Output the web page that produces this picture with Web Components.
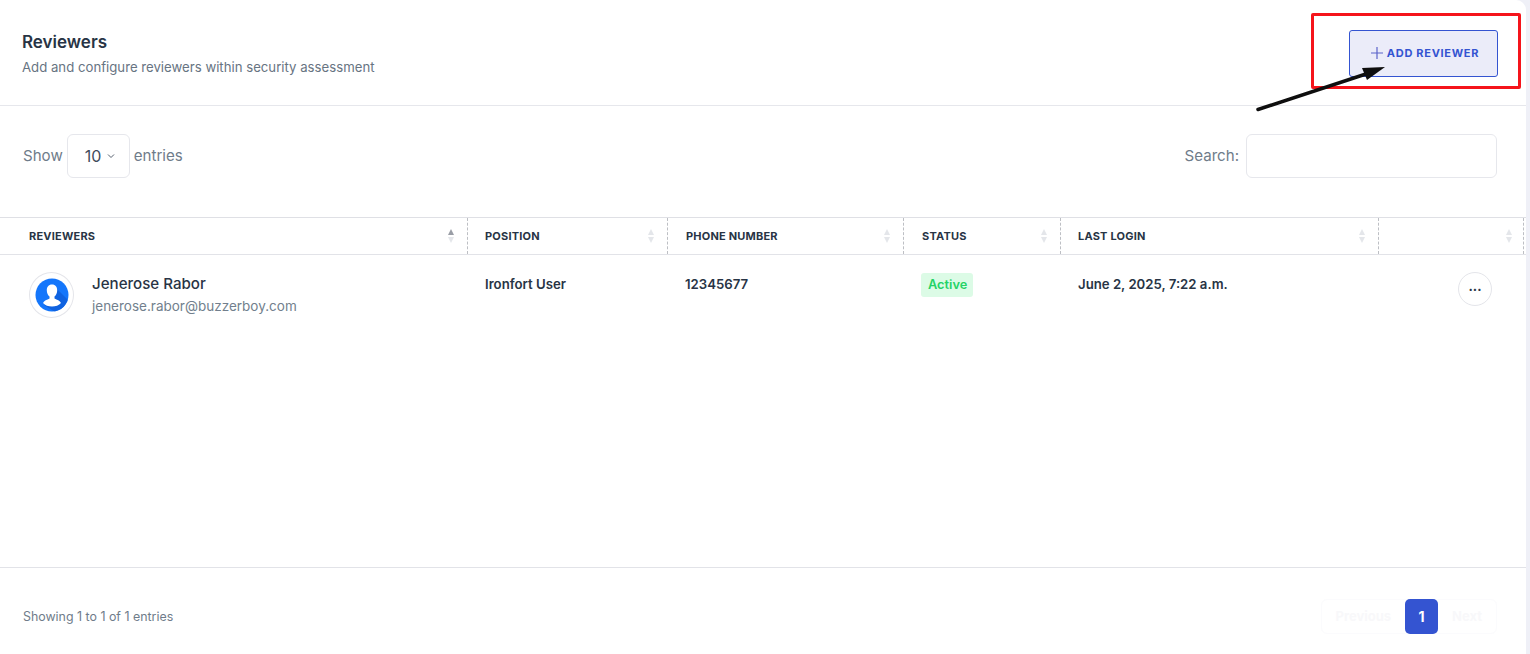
<!DOCTYPE html>
<html><head><meta charset="utf-8"><title>Reviewers</title>
<style>
html,body{margin:0;height:654px;overflow:hidden;background:#eff0f7;font-family:Inter,"Liberation Sans",sans-serif}
</style></head><body>
<review-card>
  <card-header heading="Reviewers" sub="Add and configure reviewers within security assessment"><add-button>ADD REVIEWER</add-button></card-header>
  <table-controls></table-controls>
  <reviewers-table></reviewers-table>
  <table-footer></table-footer>
</review-card>
<script>
function el(name,css,html){customElements.define(name,class extends HTMLElement{connectedCallback(){if(this.shadowRoot)return;const r=this.attachShadow({mode:'open'});r.innerHTML='<style>'+css+'</style>'+(typeof html==='function'?html(this):html);}});}
el('review-card',`:host{display:flex;flex-direction:column;position:relative;width:1526px;height:654px;background:#fff;border-top-right-radius:10px;box-sizing:border-box;overflow:hidden}
.mark{position:absolute;left:1311px;top:13px;width:210px;height:76px;box-sizing:border-box;border:3px solid #f5141b;border-radius:2px;z-index:3}
svg{position:absolute;left:1250px;top:60px;z-index:4}`,
`<slot></slot><div class="mark"></div><svg width="140" height="56" viewBox="0 0 140 56"><path d="M8 49.500L122 12" stroke="#0e0e0e" stroke-width="3.500" stroke-linecap="round" fill="none"/><path d="M135 7L112 8L117 20Z" fill="#0e0e0e"/></svg>`);
el('card-header',`:host{display:flex;flex:none;justify-content:space-between;align-items:flex-start;height:106px;box-sizing:border-box;border-bottom:1px solid #e6e7ec;padding:30px 28px 0 22px}
h2{margin:0;font-size:17px;line-height:24px;font-weight:600;color:#283445}
p{margin:3px 0 0;font-size:13.200px;line-height:20px;color:#677482}`,
h=>`<div><h2>${h.getAttribute('heading')}</h2><p>${h.getAttribute('sub')}</p></div><slot></slot>`);
el('add-button',`:host{display:flex;align-items:center;justify-content:center;gap:3px;width:149px;height:47px;box-sizing:border-box;padding:0 0 2px 2px;background:#ebecf9;border:1px solid #3454d1;border-radius:3px;color:#3454d1;font-size:11px;font-weight:700;letter-spacing:.7px}
svg{display:block}`,
`<svg width="14" height="14" viewBox="0 0 14 14"><path d="M7 1V13M1 7H13" stroke="#5b63c9" stroke-width="1.200"/></svg><slot></slot>`);
el('table-controls',`:host{display:flex;flex:none;justify-content:space-between;align-items:center;height:111px;box-sizing:border-box;padding:0 29px 11px 23px;font-size:15.100px;color:#6f7c8a}
.l,.r{display:flex;align-items:center}
.l>span,.r>span{margin-top:-1px}
.sel{display:flex;align-items:center;gap:6px;width:63px;height:44px;box-sizing:border-box;padding-left:17px;margin:0 4px 0 4px;border:1px solid #e6e7ec;border-radius:6px;color:#3f4c5c;font-size:16px}
.box{width:251px;height:44px;box-sizing:border-box;margin-left:7px;border:1px solid #e6e7ec;border-radius:6px}`,
`<div class="l"><span>Show</span><div class="sel"><span>10</span><svg width="8" height="6" viewBox="0 0 8 6"><path d="M1 1.500L4 4.500L7 1.500" stroke="#56606e" fill="none"/></svg></div><span>entries</span></div><div class="r"><span>Search:</span><div class="box"></div></div>`);
el('sort-icon',`:host{display:flex;flex-direction:column;gap:2px}
i{display:block;width:0;height:0;border-left:3.500px solid transparent;border-right:3.500px solid transparent}
.u{border-bottom:6px solid var(--up,#e4e6ea)}.d{border-top:6px solid #e4e6ea}`,`<i class="u"></i><i class="d"></i>`);
el('reviewers-table',`:host{display:block;flex:none;height:350px;border-bottom:1px solid #e2e3e8;box-sizing:content-box}
.g{display:grid;grid-template-columns:468px 200px 236px 157px 318px 145px}
.h{height:38px;box-sizing:border-box;border-top:1px solid #dfe0e5;border-bottom:1px solid #e2e3e8;font-size:11px;font-weight:700;color:#283445;letter-spacing:.2px}
.h>div{display:flex;align-items:center;justify-content:space-between;padding:0 13px 0 17px;border-right:1px dashed #bdbfc4}
.h>div:first-child{padding-left:29px;}
.h>div:nth-child(3),.h>div:nth-child(4){padding-left:18px}
.h>div:last-child{border-right:1px dashed #bdbfc4;padding-right:11px}
.r{font-size:13.200px;font-weight:600;color:#283445;padding-top:17px}
.r>div{padding-left:17px;line-height:24px}
.who{display:flex;gap:18px;padding-left:29px!important}
.av{width:45px;height:46px;box-sizing:border-box;border:1px solid #e4e5ea;border-radius:50%;display:flex;align-items:center;justify-content:center;flex:none}
.n{font-size:15.100px;font-weight:500;line-height:24px}
.m{font-size:13.500px;font-weight:400;color:#727f8d;line-height:20px}
.st{padding-left:17px}
.b{display:inline-block;background:#dcfbe6;color:#25d366;padding:0 6px 0 7px;border-radius:3px;height:24px;line-height:24px;font-size:12.800px;margin-top:1px}
.act{display:flex;justify-content:flex-end;padding-right:32px}
.dots{width:34px;height:34px;box-sizing:border-box;border:1px solid #e4e5ea;border-radius:50%;display:flex;align-items:center;justify-content:center;font-size:13px;font-weight:700;line-height:1;color:#283445;padding-bottom:6px}`,
`<div class="g h"><div>REVIEWERS<sort-icon style="--up:#9a9ea6"></sort-icon></div><div>POSITION<sort-icon></sort-icon></div><div>PHONE NUMBER<sort-icon></sort-icon></div><div>STATUS<sort-icon></sort-icon></div><div>LAST LOGIN<sort-icon></sort-icon></div><div><span></span><sort-icon></sort-icon></div></div>
<div class="g r"><div class="who"><div class="av"><svg width="34" height="34" viewBox="0 0 34 34"><defs><clipPath id="c"><circle cx="17" cy="17" r="16.500"/></clipPath></defs><circle cx="17" cy="17" r="16.500" fill="#1476fb"/><path clip-path="url(#c)" d="M21 10L34 23V34H20L9 27Z" fill="#0f62e0"/><path d="M17 6.500C13.500 6.500 11.800 9 11.800 12.200C11.800 15 13 17.200 14.500 18.500V20.500C12 21.800 9 22.500 8 25C10 27.500 13.500 28.500 17 28.500C20.500 28.500 24 27.500 26 25C25 22.500 22 21.800 19.500 20.500V18.500C21 17.200 22.200 15 22.200 12.200C22.200 9 20.500 6.500 17 6.500Z" fill="#fff"/></svg></div><div><div class="n">Jenerose Rabor</div><div class="m">jenerose.rabor@buzzerboy.com</div></div></div><div>Ironfort User</div><div>12345677</div><div class="st"><span class="b">Active</span></div><div>June 2, 2025, 7:22 a.m.</div><div class="act"><div class="dots">...</div></div></div>`);
el('table-footer',`:host{display:flex;flex:none;justify-content:space-between;align-items:flex-start;height:86px;box-sizing:border-box;padding:31px 29px 0 23px;font-size:12.400px;line-height:35px;color:#6f7c8a}
.p{display:flex;align-items:center;height:35px;border:1px solid #fbfbfd;border-radius:6px;box-sizing:border-box;font-size:13px;font-weight:700;color:#f8f8fa}
.p span{padding:0 14px}
.p b{width:33px;height:35px;margin:0;background:#3454d1;color:#fff;border-radius:5px;display:flex;align-items:center;justify-content:center;font-weight:700;font-size:14px}`,
`<span>Showing 1 to 1 of 1 entries</span><div class="p"><span>Previous</span><b>1</b><span>Next</span></div>`);
</script>
</body></html>
